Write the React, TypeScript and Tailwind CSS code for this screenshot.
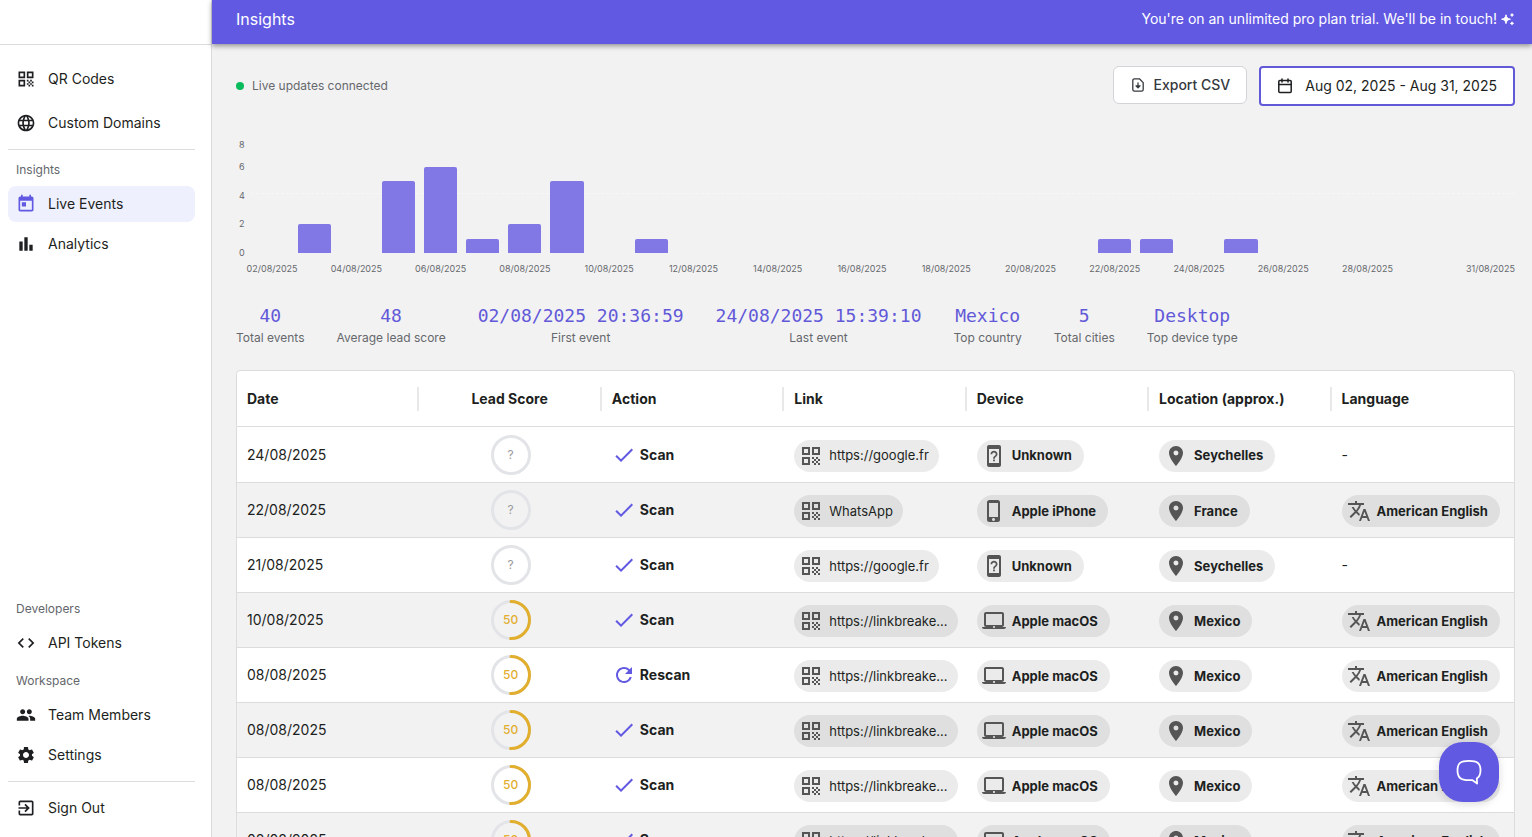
import React from 'react'
import type { IconType } from 'react-icons'
import {
  MdBarChart,
  MdCheck,
  MdCode,
  MdDeviceUnknown,
  MdExitToApp,
  MdLanguage,
  MdLaptopMac,
  MdPeople,
  MdPhoneIphone,
  MdPlace,
  MdQrCode,
  MdRefresh,
  MdSettings,
  MdToday,
  MdTranslate,
} from 'react-icons/md'

type DeviceKind = 'unknown' | 'phone' | 'laptop'

interface EventRow {
  date: string
  score: number | null
  action: 'Scan' | 'Rescan'
  link: string
  device: string
  kind: DeviceKind
  location: string
  language: string | null
}

const unknownRow = { score: null, action: 'Scan', link: 'https://google.fr', device: 'Unknown', kind: 'unknown', location: 'Seychelles', language: null } as const
const macRow = { score: 50, action: 'Scan', link: 'https://linkbreake...', device: 'Apple macOS', kind: 'laptop', location: 'Mexico', language: 'American English' } as const

const events: EventRow[] = [
  { ...unknownRow, date: '24/08/2025' },
  { date: '22/08/2025', score: null, action: 'Scan', link: 'WhatsApp', device: 'Apple iPhone', kind: 'phone', location: 'France', language: 'American English' },
  { ...unknownRow, date: '21/08/2025' },
  { ...macRow, date: '10/08/2025' },
  { ...macRow, date: '08/08/2025', action: 'Rescan' },
  { ...macRow, date: '08/08/2025' },
  { ...macRow, date: '08/08/2025' },
  { ...macRow, date: '08/08/2025' },
]

const stats = [
  { value: '40', label: 'Total events' },
  { value: '48', label: 'Average lead score' },
  { value: '02/08/2025 20:36:59', label: 'First event' },
  { value: '24/08/2025 15:39:10', label: 'Last event' },
  { value: 'Mexico', label: 'Top country' },
  { value: '5', label: 'Total cities' },
  { value: 'Desktop', label: 'Top device type' },
]

const columns = ['Date', 'Lead Score', 'Action', 'Link', 'Device', 'Location (approx.)', 'Language']

// events per day, from 02/08/2025 to 31/08/2025
const dailyEvents = [0, 2, 0, 5, 6, 1, 2, 5, 0, 1, 0, 0, 0, 0, 0, 0, 0, 0, 0, 0, 1, 1, 0, 1, 0, 0, 0, 0, 0, 0]
const CHART_MAX = 7.5

const deviceIcons: Record<DeviceKind, IconType> = {
  unknown: MdDeviceUnknown,
  phone: MdPhoneIphone,
  laptop: MdLaptopMac,
}

const dayLabel = (index: number) => {
  const day = index + 2
  if (day === 31) return '31/08/2025'
  if (day % 2 !== 0 || day === 30) return ''
  return `${String(day).padStart(2, '0')}/08/2025`
}

const NavItem: React.FC<{ icon: IconType; label: string; active?: boolean }> = ({ icon: Icon, label, active }) => (
  <a
    href="#"
    className={`flex h-9 items-center gap-3 rounded-lg px-2 text-sm text-[#1d1f21] ${active ? 'bg-[#eef0fe]' : ''}`}
  >
    <Icon className={`h-5 w-5 ${active ? 'text-[#6259e3]' : 'text-[#1d1f21]'}`} />
    {label}
  </a>
)

const NavHeading: React.FC<{ children: React.ReactNode }> = ({ children }) => (
  <p className="px-2 text-xs leading-4 text-[#63666b]">{children}</p>
)

const Sidebar: React.FC = () => (
  <aside className="flex w-[212px] shrink-0 flex-col border-r border-[#dcdcde] bg-white">
    <div className="h-[45px] shrink-0 border-b border-[#dcdcde]" />
    <nav className="flex grow flex-col pt-4 pr-4 pb-[11px] pl-2">
      <div className="flex flex-col gap-2">
        <NavItem icon={MdQrCode} label="QR Codes" />
        <NavItem icon={MdLanguage} label="Custom Domains" />
      </div>
      <hr className="my-2 border-[#dcdcde]" />
      <div className="flex flex-col gap-1 pt-1">
        <div className="pb-1">
          <NavHeading>Insights</NavHeading>
        </div>
        <NavItem icon={MdToday} label="Live Events" active />
        <NavItem icon={MdBarChart} label="Analytics" />
      </div>

      <div className="mt-auto flex flex-col">
        <NavHeading>Developers</NavHeading>
        <div className="py-2">
          <NavItem icon={MdCode} label="API Tokens" />
        </div>
        <div className="pt-1">
          <NavHeading>Workspace</NavHeading>
        </div>
        <div className="flex flex-col gap-1 pt-2">
          <NavItem icon={MdPeople} label="Team Members" />
          <NavItem icon={MdSettings} label="Settings" />
        </div>
        <hr className="my-2 border-[#dcdcde]" />
        <NavItem icon={MdExitToApp} label="Sign Out" />
      </div>
    </nav>
  </aside>
)

const SparkleIcon: React.FC = () => (
  <svg viewBox="0 0 14 14" className="h-[14px] w-[14px]" fill="currentColor" aria-hidden="true">
    <path d="M5 2.8C5.500 5.600 6.600 6.700 9.400 7.200 6.600 7.700 5.500 8.800 5 11.600 4.500 8.800 3.400 7.700 0.600 7.200 3.400 6.700 4.500 5.600 5 2.800Z" stroke="currentColor" strokeWidth="1" strokeLinejoin="round" />
    <path d="M11 0.8 11.8 2.2 13.2 3 11.8 3.8 11 5.2 10.2 3.8 8.8 3 10.2 2.2Z" />
    <path d="M11 9.2 11.8 10.6 13.2 11.4 11.8 12.2 11 13.6 10.2 12.2 8.8 11.4 10.2 10.6Z" />
  </svg>
)

const FileDownIcon: React.FC = () => (
  <svg viewBox="0 0 16 16" className="h-4 w-4" fill="none" stroke="currentColor" strokeWidth="1.3" strokeLinecap="round" strokeLinejoin="round" aria-hidden="true">
    <path d="M9.4 1.8H4.4A1.6 1.6 0 0 0 2.8 3.4v9.2a1.6 1.6 0 0 0 1.6 1.6h7.2a1.6 1.6 0 0 0 1.6-1.6V5.6Z" />
    <path d="M8 6v4.600M6 8.800l2 2 2-2Z" />
  </svg>
)

const CalendarIcon: React.FC = () => (
  <svg viewBox="0 0 16 16" className="h-4 w-4" fill="none" stroke="currentColor" strokeWidth="1.5" strokeLinecap="round" strokeLinejoin="round" aria-hidden="true">
    <rect x="1.8" y="2.6" width="12.4" height="12" rx="1" />
    <path d="M1.8 6.400h12.400M5 0.900v3M11 0.900v3" />
  </svg>
)

const EventsChart: React.FC = () => (
  <div className="flex text-[9px] leading-3 text-[#66686c]">
    <div className="flex h-[120px] w-[15px] shrink-0 flex-col justify-between pl-[3px]">
      <span className="-mb-[7px]">8</span>
      <span>6</span>
      <span>4</span>
      <span>2</span>
      <span>0</span>
    </div>
    <div className="min-w-0 grow pt-[6px]">
      <div className="relative grid h-[108px] grid-cols-[repeat(30,minmax(0,1fr))] items-end">
        <div className="absolute inset-x-0 top-[44%] border-t border-dashed border-[#f7f7f7]" />
        {dailyEvents.map((count, i) => (
          <div
            key={i}
            className="relative mx-auto w-[79%] rounded-t-xs bg-[#8178e6]"
            style={{ height: `${(count / CHART_MAX) * 100}%` }}
          />
        ))}
      </div>
      <div className="grid grid-cols-[repeat(30,minmax(0,1fr))] pt-[10px]">
        {dailyEvents.map((_, i) => (
          <span
            key={i}
            className={`flex whitespace-nowrap ${i === dailyEvents.length - 1 ? 'justify-end' : 'justify-center'}`}
          >
            {dayLabel(i)}
          </span>
        ))}
      </div>
    </div>
  </div>
)

const ScoreRing: React.FC<{ score: number | null }> = ({ score }) => {
  const radius = 18.5
  const length = 2 * Math.PI * radius
  return (
    <div className="relative mx-auto h-10 w-10">
      <svg viewBox="0 0 40 40" className="h-10 w-10 -rotate-90" fill="none" strokeWidth="3" aria-hidden="true">
        <circle cx="20" cy="20" r={radius} stroke="#e2e4e7" />
        {score !== null && (
          <circle
            cx="20"
            cy="20"
            r={radius}
            stroke="#e2ae2e"
            strokeLinecap="round"
            strokeDasharray={`${(score / 100) * length} ${length}`}
          />
        )}
      </svg>
      <span
        className={`absolute inset-0 flex items-center justify-center ${
          score === null ? 'text-xs text-[#989a9d]' : 'text-xs font-medium text-[#e2ae2e]'
        }`}
      >
        {score ?? '?'}
      </span>
    </div>
  )
}

const Chip: React.FC<{ icon: IconType; label: string; strong?: boolean }> = ({ icon: Icon, label, strong }) => (
  <span
    className={`mt-0.5 flex h-8 w-fit items-center gap-[6px] rounded-full bg-black/8 pl-[5px] text-[13px] whitespace-nowrap text-[#1d1f21] ${
      strong ? 'pr-3 font-bold' : 'pr-[10px]'
    }`}
  >
    <Icon className="h-6 w-6 shrink-0 text-[#555555]" />
    {label}
  </span>
)

const EventsTable: React.FC = () => (
  <div className="shrink-0 overflow-hidden rounded-t border border-[#dcdcde] bg-white">
    <table className="w-full table-fixed border-separate border-spacing-0 text-left text-sm text-[#1d1f21]">
      <thead>
        <tr className="h-14">
          {columns.map(column => (
            <th key={column} scope="col" className="group border-b border-[#dcdcde] p-0 font-bold">
              <div
                className={`flex h-6 items-center border-r-2 border-[#e8e8e8] px-[10px] group-last:border-transparent ${
                  column === 'Lead Score' ? 'justify-center' : ''
                }`}
              >
                {column}
              </div>
            </th>
          ))}
        </tr>
      </thead>
      <tbody>
        {events.map((event, i) => (
          <tr
            key={i}
            className="h-[55px] first:h-14 even:bg-[#f2f2f3] [&>td]:border-b [&>td]:border-[#dcdcde] [&>td]:px-[10px] [&>td]:py-0"
          >
            <td>{event.date}</td>
            <td>
              <ScoreRing score={event.score} />
            </td>
            <td>
              <div className="flex items-center gap-1 font-bold">
                {event.action === 'Scan' ? (
                  <MdCheck className="h-6 w-6 text-[#6259e3]" />
                ) : (
                  <MdRefresh className="h-6 w-6 text-[#6259e3]" />
                )}
                {event.action}
              </div>
            </td>
            <td>
              <Chip icon={MdQrCode} label={event.link} />
            </td>
            <td>
              <Chip icon={deviceIcons[event.kind]} label={event.device} strong />
            </td>
            <td>
              <Chip icon={MdPlace} label={event.location} strong />
            </td>
            <td>{event.language ? <Chip icon={MdTranslate} label={event.language} strong /> : '-'}</td>
          </tr>
        ))}
      </tbody>
    </table>
  </div>
)

const App: React.FC = () => {
  return (
    <div className="flex h-screen overflow-hidden bg-[#f2f2f3] font-[Inter,sans-serif]">
      <Sidebar />

      <div className="flex min-w-0 grow flex-col">
        <header className="z-10 flex h-11 shrink-0 items-center justify-between bg-[#6259e3] pr-[17px] pb-[6px] pl-6 text-white shadow-[0_2px_5px_rgba(0,0,0,0.4)]">
          <h1 className="text-base">Insights</h1>
          <p className="flex items-center gap-1 text-sm">
            You're on an unlimited pro plan trial. We'll be in touch!
            <SparkleIcon />
          </p>
        </header>

        <main className="flex min-h-0 grow flex-col overflow-y-auto pt-[22px] pr-[17px] pl-6 [scrollbar-width:none]">
          {/* Toolbar */}
          <div className="flex items-start justify-between">
            <div className="flex h-10 items-center gap-2 text-xs text-[#66686c]">
              <span className="h-2 w-2 rounded-full bg-[#0cbc5c]" />
              Live updates connected
            </div>
            <div className="flex items-start gap-3">
              <button className="flex h-[38px] items-center gap-2 rounded-md border border-[#d3d4d7] bg-white px-4 text-sm font-medium text-[#36393e]">
                <FileDownIcon />
                Export CSV
              </button>
              <button className="flex h-10 items-center gap-3 rounded border-2 border-[#6259d8] bg-white px-4 text-sm text-[#1d1f21]">
                <CalendarIcon />
                Aug 02, 2025 - Aug 31, 2025
              </button>
            </div>
          </div>

          <div className="pt-[33px]">
            <EventsChart />
          </div>

          {/* Summary */}
          <dl className="flex flex-wrap gap-x-8 pt-[29px] pb-[22px] text-center">
            {stats.map(stat => (
              <div key={stat.label} className="flex flex-col-reverse">
                <dt className="text-xs leading-5 text-[#66686c]">{stat.label}</dt>
                <dd className="font-['DejaVu_Sans_Mono',monospace] text-lg leading-6 text-[#6259d8]">{stat.value}</dd>
              </div>
            ))}
          </dl>

          <EventsTable />
        </main>
      </div>

      <button
        aria-label="Open chat"
        className="fixed right-[33px] bottom-[35px] z-20 flex h-[60px] w-[60px] items-center justify-center rounded-3xl bg-[#6259e3] text-white shadow-[0_2px_8px_rgba(0,0,0,0.15)]"
      >
        <svg viewBox="0 0 28 28" className="h-7 w-7" fill="none" stroke="currentColor" strokeWidth="1.8" strokeLinejoin="round" aria-hidden="true">
          <path d="M14 2.800c8.500 0 11.500 2.600 11.500 9.500 0 4.300-1.200 6.800-3.700 8.200l.3 5-4.900-3.400c-1 .1-2.100.1-3.200.1-8.500 0-11.500-2.700-11.500-9.900S5.500 2.800 14 2.800Z" />
        </svg>
      </button>
    </div>
  )
}

export default App
